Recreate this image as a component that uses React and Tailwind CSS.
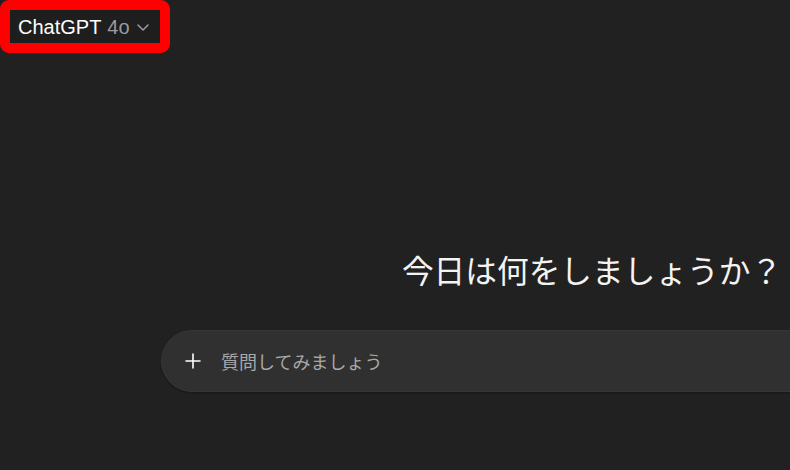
import { useState } from "react";

const ChevronDown = () => (
     <svg width="14" height="14" viewBox="0 0 14 14" fill="none" className="ml-[6px]">
          <path d="M2 5l5 5 5-5" stroke="#9b9b9b" strokeWidth="1.5" strokeLinecap="round" strokeLinejoin="round" />
     </svg>
);

const PlusIcon = () => (
     <svg width="16" height="16" viewBox="0 0 16 16" fill="none">
          <path d="M8 1v14M1 8h14" stroke="#ffffff" strokeWidth="1.6" strokeLinecap="round" />
     </svg>
);

const App = () => {
     const [text, setText] = useState("");

     return (
          <div
               className="w-[790px] h-[470px] overflow-hidden bg-[#212121] text-white"
               style={{ fontFamily: '"Liberation Sans", "Noto Sans CJK JP", sans-serif' }}
          >
               <div className="w-[1182px] flex flex-col">
                    {/* header: model picker, marked with a red box */}
                    <div className="flex items-start h-[54px]">
                         <div className="border-[10px] border-[#ff0000] rounded-[9px]">
                              <button className="flex items-center h-[33px] w-[150px] pl-2 bg-[#1e1e1e] text-[20px] leading-[28px] cursor-pointer">
                                   <span className="text-white">ChatGPT</span>
                                   <span className="text-[#9b9b9b] ml-[6px]">4o</span>
                                   <ChevronDown />
                              </button>
                         </div>
                    </div>

                    {/* center */}
                    <div className="flex flex-col items-center pt-[195px]">
                         <h1
                              className="text-[31.7px] leading-[40px] font-normal text-[#f3f3f3] pl-[2px]"
                              style={{ fontFamily: '"Noto Sans CJK JP", sans-serif' }}
                         >
                              今日は何をしましょうか？
                         </h1>

                         <div className="mt-[41px] w-[860px] h-[62px] rounded-full bg-[#303030] border border-[#363636] shadow-[0_1px_2px_rgba(0,0,0,0.3)] flex items-center pl-[23px] gap-[20px]">
                              <button className="flex items-center justify-center">
                                   <PlusIcon />
                              </button>
                              <input
                                   value={text}
                                   onChange={(e) => setText(e.target.value)}
                                   placeholder="質問してみましょう"
                                   className="flex-1 bg-transparent outline-none text-[18px] text-white placeholder:text-[#a8a8a8]"
                                   style={{ fontFamily: '"Noto Sans CJK JP", sans-serif' }}
                              />
                         </div>
                    </div>
               </div>
          </div>
     );
};

export default App;
